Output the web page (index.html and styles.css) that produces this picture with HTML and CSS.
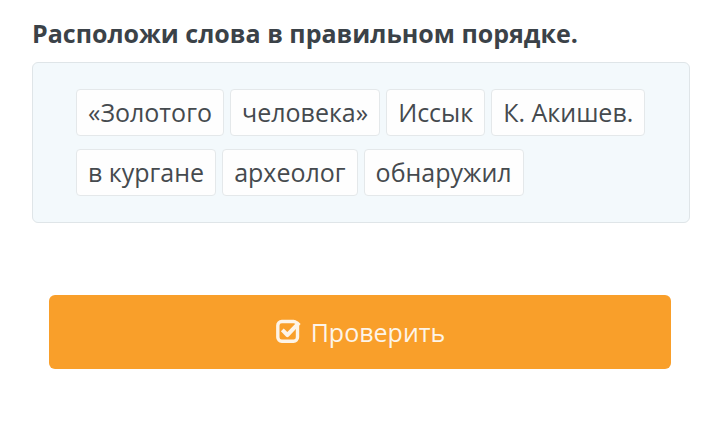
FILE: index.html
```html
<!DOCTYPE html>
<html lang="ru">
<head>
    <meta charset="UTF-8">
    <title>Расположи слова</title>
    <link rel="stylesheet" href="styles.css">
</head>
<body>
    <div class="task">
        <h2 class="task-title">Расположи слова в правильном порядке.</h2>
        <div class="words-box">
            <div class="words">
                <span class="word">«Золотого</span>
                <span class="word">человека»</span>
                <span class="word">Иссык</span>
                <span class="word">К. Акишев.</span>
                <span class="word">в кургане</span>
                <span class="word">археолог</span>
                <span class="word">обнаружил</span>
            </div>
        </div>
        <button class="btn-check">
            <svg class="icon" viewBox="0 0 24 24" width="27" height="27">
                <rect x="2.5" y="4" width="17.5" height="17.5" rx="3.5" fill="none" stroke="currentColor" stroke-width="3"/>
                <path d="M6.5 11.5 L11 16 L21.5 5" fill="none" stroke="currentColor" stroke-width="3.6" stroke-linejoin="round"/>
            </svg>
            Проверить
        </button>
    </div>
</body>
</html>
```

FILE: styles.css
```css
body {
    margin: 0;
    background: #ffffff;
    font-family: "Open Sans", "Noto Sans", sans-serif;
}

.task {
    padding: 16px 20px 0 32px;
}

.task-title {
    margin: 0 0 12px;
    font-size: 25px;
    line-height: 34px;
    font-weight: 700;
    color: #3b4248;
}

.words-box {
    background: #f3f9fc;
    border: 1px solid #dfe5e8;
    border-radius: 6px;
    padding: 26px 20px 26px 43px;
}

.words {
    display: flex;
    flex-wrap: wrap;
    gap: 13px 6px;
}

.word {
    background: #fefefe;
    border: 1px solid #e4e8ea;
    border-radius: 4px;
    padding: 0 11px;
    height: 45px;
    line-height: 45px;
    font-size: 25px;
    color: #454a4e;
}

.btn-check {
    display: flex;
    align-items: center;
    justify-content: center;
    gap: 9px;
    width: 622px;
    height: 74px;
    margin: 72px 0 0 17px;
    background: #f99f2a;
    border: none;
    border-radius: 6px;
    color: #fdf4e8;
    font-family: "Open Sans", "Noto Sans", sans-serif;
    font-size: 25px;
    cursor: pointer;
}

.icon {
    margin-top: -3px;
}
```
